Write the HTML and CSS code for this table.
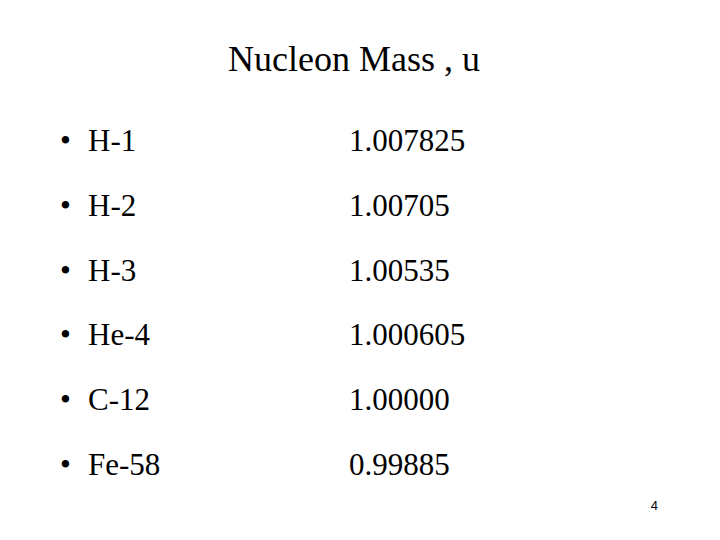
FILE: index.html
```html
<!DOCTYPE html>
<html lang="en">
<head>
  <meta charset="UTF-8" />
  <title>Nucleon Mass</title>
  <link rel="stylesheet" href="styles.css">
</head>
<body>
  <div class="slide">
    <h1 class="title">Nucleon Mass , u</h1>
    <ul class="masses">
      <li><span class="bullet">•</span><span class="name">H-1</span><span class="value">1.007825</span></li>
      <li><span class="bullet">•</span><span class="name">H-2</span><span class="value">1.00705</span></li>
      <li><span class="bullet">•</span><span class="name">H-3</span><span class="value">1.00535</span></li>
      <li><span class="bullet">•</span><span class="name">He-4</span><span class="value">1.000605</span></li>
      <li><span class="bullet">•</span><span class="name">C-12</span><span class="value">1.00000</span></li>
      <li><span class="bullet">•</span><span class="name">Fe-58</span><span class="value">0.99885</span></li>
    </ul>
    <div class="page-num">4</div>
  </div>
</body>
</html>
```
FILE: styles.css
```css
* {
  box-sizing: border-box;
}
body {
  margin: 0;
  background: #ffffff;
  color: #000000;
  font-family: 'Liberation Serif', 'Times New Roman', serif;
}
.slide {
  width: 720px;
  height: 540px;
  padding-top: 37px;
  display: flex;
  flex-direction: column;
}
.title {
  margin: 0;
  font-size: 36px;
  font-weight: normal;
  line-height: 44px;
  text-align: center;
  padding-right: 12px;
}
.masses {
  list-style: none;
  margin: 28px 0 0;
  padding: 0 0 0 60px;
}
.masses li {
  display: flex;
  font-size: 31px;
  line-height: 64.8px;
}
.bullet {
  width: 28px;
}
.name {
  width: 261px;
}
.page-num {
  margin-top: auto;
  margin-bottom: 28px;
  align-self: flex-end;
  padding-right: 62px;
  font-family: 'Liberation Sans', Arial, sans-serif;
  font-size: 13px;
}
```
